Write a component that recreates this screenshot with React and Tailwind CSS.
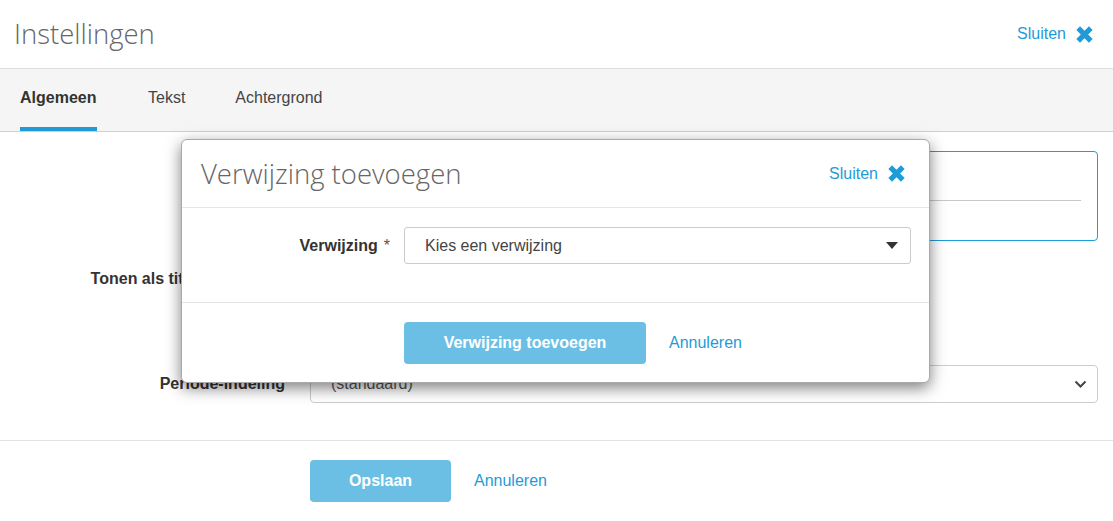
import React from "react";

const sans = "font-['Liberation_Sans',Arial,sans-serif]";
const light = "font-['Open_Sans',sans-serif] font-light";

function XIcon() {
  return (
    <svg width="19" height="19" viewBox="0 0 19 19" className="shrink-0">
      <path d="M3.2 3.2 L15.8 15.8 M15.8 3.2 L3.2 15.8" stroke="currentColor" strokeWidth="5.2" strokeLinecap="butt" />
    </svg>
  );
}

function CloseLink({ className = "" }) {
  return (
    <div className={`flex items-center gap-[9px] text-[#1f9bd7] ${className}`}>
      <span className={`${sans} text-[16px]`}>Sluiten</span>
      <XIcon />
    </div>
  );
}

export default function App() {
  return (
    <div className={`relative w-[1113px] h-[521px] bg-white overflow-hidden ${sans} text-[#333]`}>
      {/* Header */}
      <div className="h-[69px] flex items-center justify-between pl-[14px] pr-[19px] border-b border-[#dedede]">
        <h1 className={`${light} text-[27.5px] text-[#666] leading-none`}>Instellingen</h1>
        <CloseLink />
      </div>

      {/* Tabs */}
      <div className="h-[63px] bg-[#f5f5f5] border-b border-[#cfcfcf] flex pl-[20px] text-[16px]">
        <div className="relative flex items-center font-bold text-[#333] pb-[4px] w-[77px]">
          Algemeen
          <div className="absolute left-0 right-0 bottom-0 h-[4px] bg-[#1f9bd7]" />
        </div>
        <div className="flex items-center ml-[51px] text-[#444] pb-[4px]">Tekst</div>
        <div className="flex items-center ml-[50px] text-[#444] pb-[4px]">Achtergrond</div>
      </div>

      {/* Background form */}
      <div className="pt-[19px] pr-[15px] text-[16px]">
        <div className="flex">
          <div className="w-[285px]" />
          <div className="ml-[25px] flex-1 h-[90px] border border-[#1f9bd7] rounded-[4px] px-[16px]">
            <div className="h-[49px] border-b border-[#c8c8c8]" />
          </div>
        </div>
        <div className="flex items-center mt-[26px] h-[24px]">
          <div className="w-[285px] text-right font-bold whitespace-nowrap">Tonen als titel van pagina</div>
          <div className="ml-[25px] w-[16px] h-[16px] border border-[#999] rounded-[2px]" />
        </div>
        <div className="flex items-center mt-[74px]">
          <div className="w-[285px] text-right font-bold">Periode-indeling</div>
          <div className="ml-[25px] flex-1 h-[38px] border border-[#ccc] rounded-[4px] flex items-center justify-between pl-[20px] pr-[10px] text-[#555]">
            <span>(standaard)</span>
            <svg width="13" height="9" viewBox="0 0 13 9" fill="none">
              <path d="M1.5 1.5 L6.5 6.5 L11.5 1.5" stroke="#444" strokeWidth="2" />
            </svg>
          </div>
        </div>
      </div>

      <div className="mt-[37px] border-t border-[#e2e2e2]" />
      <div className="flex items-center mt-[19px] pl-[310px]">
        <button className="w-[141px] h-[42px] rounded-[4px] bg-[#6bbfe5] text-white font-bold text-[16px]">Opslaan</button>
        <span className="ml-[23px] text-[#1f9bd7] text-[16px]">Annuleren</span>
      </div>

      {/* Modal */}
      <div className="absolute left-[181px] top-[139px] w-[749px] h-[244px] bg-white border border-[#a9a9a9] rounded-[6px] shadow-[0_5px_15px_rgba(0,0,0,0.5)] flex flex-col">
        <div className="h-[68px] flex items-center justify-between pl-[19px] pr-[23px] border-b border-[#e5e5e5]">
          <h2 className={`${light} text-[27.5px] text-[#666] leading-none`}>Verwijzing toevoegen</h2>
          <CloseLink />
        </div>
        <div className="h-[95px] flex items-start pt-[19px] border-b border-[#e5e5e5] text-[16px]">
          <div className="w-[208px] flex justify-end items-center h-[37px]">
            <span className="font-bold">Verwijzing</span>
            <span className="ml-[6px] text-[#555]">*</span>
          </div>
          <div className="ml-[14px] w-[507px] h-[37px] border border-[#cbcbcb] rounded-[3px] flex items-center justify-between pl-[20px] pr-[12px]">
            <span className="text-[#444]">Kies een verwijzing</span>
            <svg width="12" height="7" viewBox="0 0 12 7">
              <path d="M0 0 L12 0 L6 7 Z" fill="#333" />
            </svg>
          </div>
        </div>
        <div className="flex-1 flex items-center pl-[222px]">
          <button className="w-[242px] h-[42px] rounded-[4px] bg-[#6bbfe5] text-white font-bold text-[16px]">Verwijzing toevoegen</button>
          <span className="ml-[23px] text-[#1f9bd7] text-[16px]">Annuleren</span>
        </div>
      </div>
    </div>
  );
}
